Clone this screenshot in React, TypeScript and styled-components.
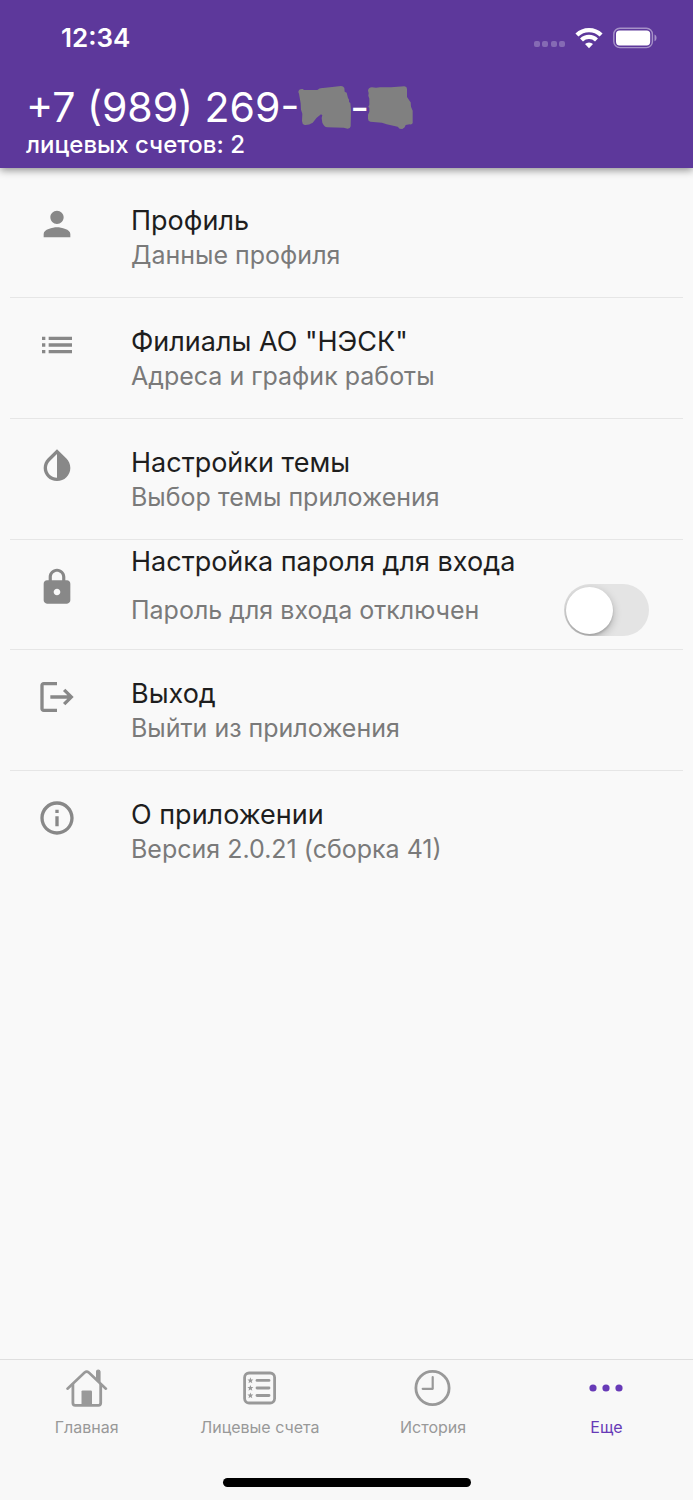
import React, { useState } from "react";
import styled, { createGlobalStyle } from "styled-components";
import { MdInfoOutline, MdInvertColors, MdList, MdLock, MdLogout, MdPerson } from "react-icons/md";

const GlobalStyle = createGlobalStyle`
  *, *::before, *::after { box-sizing: border-box; }
  body {
    margin: 0;
    background: #f9f9f9;
    font-family: Inter, Roboto, sans-serif;
    color: #1e1e1e;
  }
`;

const Page = styled.div`
  display: flex;
  flex-direction: column;
  min-height: 100vh;
`;

const Header = styled.header`
  position: relative;
  padding-bottom: 10px;
  background: #5d389b;
  color: #fff;
  box-shadow: 0 2px 8px rgba(0, 0, 0, 0.45);
`;

const StatusBar = styled.div`
  display: flex;
  align-items: center;
  justify-content: space-between;
  height: 76px;
  padding: 0 36px 0 61px;
`;

const Time = styled.time`
  font-size: 26px;
  line-height: 32px;
  font-weight: 600;
`;

const StatusIcons = styled.div`
  display: flex;
  align-items: center;
  gap: 10px;
`;

const Account = styled.div`
  padding: 6px 26px 0;
`;

const Phone = styled.h1`
  display: flex;
  align-items: center;
  margin: 0;
  font-size: 41px;
  line-height: 50px;
  font-weight: 400;
  white-space: pre;
`;

const Mask = styled.svg`
  flex: none;
  margin: 0 -1px;
  fill: #808080;
`;

const AccountCount = styled.p`
  margin: 0;
  font-size: 24px;
  line-height: 26px;
  font-weight: 500;
`;

const Menu = styled.ul`
  flex: 1;
  margin: 0;
  padding: 9px 10px 0;
  list-style: none;
`;

const MenuItem = styled.li`
  border-bottom: 1px solid #e6e6e6;

  &:last-child {
    border-bottom: 0;
  }
`;

const MenuButton = styled.button`
  display: flex;
  gap: 54px;
  width: 100%;
  padding: 27px 27px 25px;
  border: 0;
  background: none;
  font: inherit;
  color: inherit;
  text-align: left;
  cursor: pointer;
`;

const IconSlot = styled.span`
  flex: none;
  width: 40px;
  height: 40px;
  color: #888;

  svg {
    display: block;
    width: 40px;
    height: 40px;
  }
`;

const Title = styled.span`
  display: block;
  font-size: 27px;
  line-height: 34px;
`;

const Subtitle = styled.span`
  display: block;
  font-size: 25px;
  line-height: 34px;
  color: #7a7a7a;
`;

const SwitchItem = styled.label`
  display: flex;
  align-items: flex-start;
  gap: 54px;
  padding: 5px 34px 13px 27px;
  cursor: pointer;

  ${IconSlot} {
    margin-top: 22px;
  }
`;

const SwitchBody = styled.span`
  display: flex;
  flex: 1;
  flex-direction: column;
  gap: 5px;
`;

const SwitchLine = styled.span`
  display: flex;
  align-items: center;
  justify-content: space-between;
`;

const Switch = styled.input`
  appearance: none;
  display: flex;
  flex: none;
  align-items: center;
  width: 85px;
  height: 52px;
  margin: 0;
  padding: 0 2px;
  overflow: hidden;
  border-radius: 26px;
  background: #e4e4e4;
  cursor: pointer;

  &::before {
    content: "";
    width: 47px;
    height: 47px;
    border-radius: 50%;
    background: #fff;
    box-shadow: 0 3px 9px rgba(0, 0, 0, 0.25), 0 2px 2px rgba(0, 0, 0, 0.12);
  }

  &:checked {
    justify-content: flex-end;
    background: #673ab7;
  }
`;

const Footer = styled.footer`
  border-top: 1px solid #dfdfdf;
  background: #f8f8f8;
`;

const TabBar = styled.nav`
  display: grid;
  grid-template-columns: repeat(4, 1fr);
`;

const Tab = styled.a<{ $active?: boolean }>`
  display: flex;
  flex-direction: column;
  align-items: center;
  gap: 7px;
  padding-top: 7px;
  font-size: 16px;
  line-height: 22px;
  color: ${(p) => (p.$active ? "#673ab7" : "#999")};
  text-decoration: none;
`;

const HomeIndicator = styled.div`
  width: 248px;
  height: 9px;
  margin: 40px auto 13px;
  border-radius: 5px;
  background: #000;
`;

const SignalIcon = () => (
  <svg width="31" height="20" viewBox="0 0 31 20" fill="#fff" fillOpacity="0.25" aria-hidden="true">
    {[0, 8, 17, 25].map((x) => (
      <rect key={x} x={x} y="13" width="6" height="6" rx="2" />
    ))}
  </svg>
);

const WifiIcon = () => (
  <svg width="28" height="22" viewBox="0 0 28 22" aria-hidden="true">
    <g fill="none" stroke="#fff" strokeWidth="4.2">
      <path d="M1.9 8.1a17.3 17.3 0 0 1 24.2 0" />
      <path d="M6.5 13a10.7 10.7 0 0 1 15 0" />
    </g>
    <path d="M14 21.2l-4-4.1a5.8 5.8 0 0 1 8 0z" fill="#fff" />
  </svg>
);

const BatteryIcon = () => (
  <svg width="44" height="22" viewBox="0 0 44 22" aria-hidden="true">
    <rect x="0.8" y="1.2" width="38.6" height="19.4" rx="6" fill="none" stroke="#fff" strokeOpacity="0.45" strokeWidth="1.4" />
    <rect x="3" y="3.4" width="34.2" height="15" rx="3.6" fill="#fff" />
    <path d="M41.5 7.6c2.7 1.2 2.7 5.4 0 6.6z" fill="#fff" fillOpacity="0.45" />
  </svg>
);

const FirstMask = () => (
  <Mask width="53" height="43" viewBox="50 32 159 129" aria-hidden="true">
    <path d="M51 50Q52 40 64 41L68 44 108 44Q115 37 125 38L153 35 179 32Q186 32 189 38L190 49 196 52 200 68 203 73 203 80 207 83 209 103 208 153Q207 160 199 160L187 157 138 156Q128 154 123 142L121 128 123 120 119 117 106 127 94 142Q82 150 70 149 62 146 62 137L63 115 59 103 58 84 53 55z" />
  </Mask>
);

const SecondMask = () => (
  <Mask width="45" height="43" viewBox="264 32 135 129" aria-hidden="true">
    <path d="M264 46Q265 37 276 36L288 37 300 36 333 36 373 33Q381 34 381 41L381 65 389 77 392 81 393 94 398 106 398 143Q397 148 389 147L377 149 374 156 367 161 359 160 353 154 320 147 306 142 271 139Q264 137 264 130L264 118 268 109 268 98 265 94 268 88 268 70 265 61 266 53z" />
  </Mask>
);

const HomeIcon = () => (
  <svg width="42" height="42" viewBox="0 0 42 42" fill="none" stroke="currentColor" strokeLinecap="round" strokeLinejoin="round" aria-hidden="true">
    <path d="M1.5 21.7L18.6 5.5Q20.7 3.8 22.8 5.5L39.9 21.7" strokeWidth="2.6" />
    <path d="M6.9 17.4V36Q6.9 38.3 9.2 38.3H32.4Q34.7 38.3 34.7 36V17.4" strokeWidth="2.8" />
    <path d="M30.6 11V4.5Q30.6 3.2 32.2 3.2T34 4.5V14.5z" fill="currentColor" strokeWidth="1.2" />
    <path d="M15.5 38V24.6Q15.5 23.4 16.7 23.4H24.8Q26 23.4 26 24.6V38z" fill="currentColor" stroke="none" />
  </svg>
);

const AccountsIcon = () => (
  <svg width="42" height="42" viewBox="0 0 42 42" fill="none" stroke="currentColor" strokeLinecap="round" aria-hidden="true">
    <rect x="5.6" y="6" width="30" height="30" rx="4.5" strokeWidth="2.8" />
    {[13.4, 21, 28.5].map((y) => (
      <g key={y}>
        <path d={`M18 ${y}H30`} strokeWidth="2.8" />
        <path
          d="M0-3.1L.8-.9 3-.9 1.3.5 1.9 2.8 0 1.5-1.9 2.8-1.3.5-3-.9-.8-.9z"
          transform={`translate(11.4 ${y})`}
          fill="currentColor"
          stroke="none"
        />
      </g>
    ))}
  </svg>
);

const HistoryIcon = () => (
  <svg width="42" height="42" viewBox="0 0 42 42" fill="none" stroke="currentColor" strokeLinecap="round" strokeLinejoin="round" aria-hidden="true">
    <circle cx="20.5" cy="21" r="16.6" strokeWidth="2.8" />
    <path d="M20.7 10.2V21.8H10.7" strokeWidth="2.2" />
  </svg>
);

const MoreIcon = () => (
  <svg width="42" height="42" viewBox="0 0 42 42" fill="currentColor" aria-hidden="true">
    <circle cx="8" cy="21" r="3.6" />
    <circle cx="21" cy="21" r="3.6" />
    <circle cx="34" cy="21" r="3.6" />
  </svg>
);

interface EntryProps {
  icon: React.ReactNode;
  title: string;
  subtitle: string;
}

const Entry = ({ icon, title, subtitle }: EntryProps) => (
  <MenuItem>
    <MenuButton type="button">
      <IconSlot>{icon}</IconSlot>
      <span>
        <Title>{title}</Title>
        <Subtitle>{subtitle}</Subtitle>
      </span>
    </MenuButton>
  </MenuItem>
);

export default function App() {
  const [locked, setLocked] = useState(false);

  return (
    <Page>
      <GlobalStyle />
      <Header>
        <StatusBar>
          <Time>12:34</Time>
          <StatusIcons>
            <SignalIcon />
            <WifiIcon />
            <BatteryIcon />
          </StatusIcons>
        </StatusBar>
        <Account>
          <Phone>
            +7 (989) 269-
            <FirstMask />-<SecondMask />
          </Phone>
          <AccountCount>лицевых счетов: 2</AccountCount>
        </Account>
      </Header>

      <Menu>
        <Entry icon={<MdPerson />} title="Профиль" subtitle="Данные профиля" />
        <Entry icon={<MdList />} title={'Филиалы АО "НЭСК"'} subtitle="Адреса и график работы" />
        <Entry icon={<MdInvertColors />} title="Настройки темы" subtitle="Выбор темы приложения" />
        <MenuItem>
          <SwitchItem>
            <IconSlot>
              <MdLock />
            </IconSlot>
            <SwitchBody>
              <Title>Настройка пароля для входа</Title>
              <SwitchLine>
                <Subtitle>Пароль для входа отключен</Subtitle>
                <Switch
                  type="checkbox"
                  role="switch"
                  checked={locked}
                  onChange={(e) => setLocked(e.target.checked)}
                />
              </SwitchLine>
            </SwitchBody>
          </SwitchItem>
        </MenuItem>
        <Entry icon={<MdLogout />} title="Выход" subtitle="Выйти из приложения" />
        <Entry icon={<MdInfoOutline />} title="О приложении" subtitle="Версия 2.0.21 (сборка 41)" />
      </Menu>

      <Footer>
        <TabBar>
          <Tab href="#home">
            <HomeIcon />
            Главная
          </Tab>
          <Tab href="#accounts">
            <AccountsIcon />
            Лицевые счета
          </Tab>
          <Tab href="#history">
            <HistoryIcon />
            История
          </Tab>
          <Tab href="#more" $active aria-current="page">
            <MoreIcon />
            Еще
          </Tab>
        </TabBar>
        <HomeIndicator />
      </Footer>
    </Page>
  );
}
